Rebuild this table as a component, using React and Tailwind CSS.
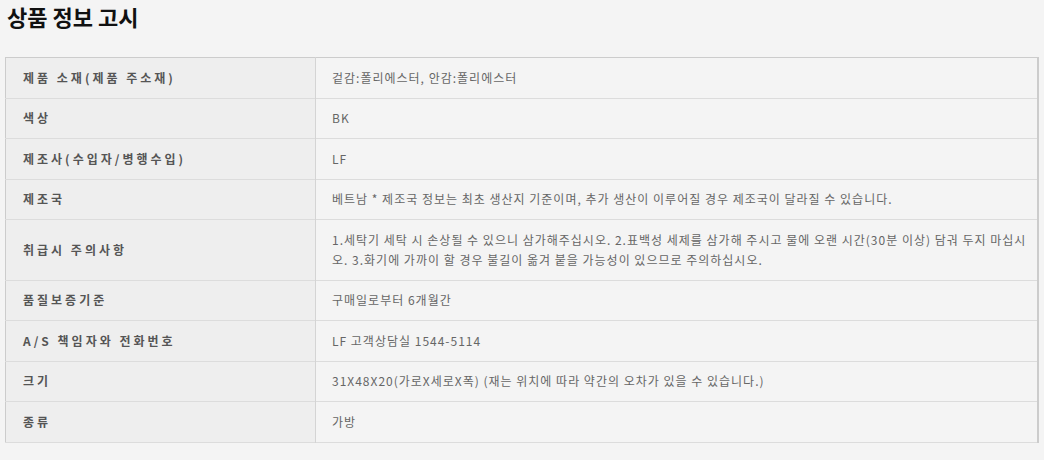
import React from 'react';

const rows = [
  ['제품 소재(제품 주소재)', '겉감:폴리에스터, 안감:폴리에스터'],
  ['색상', 'BK'],
  ['제조사(수입자/병행수입)', 'LF'],
  ['제조국', '베트남 * 제조국 정보는 최초 생산지 기준이며, 추가 생산이 이루어질 경우 제조국이 달라질 수 있습니다.'],
  ['취급시 주의사항', '1.세탁기 세탁 시 손상될 수 있으니 삼가해주십시오. 2.표백성 세제를 삼가해 주시고 물에 오랜 시간(30분 이상) 담궈 두지 마십시오. 3.화기에 가까이 할 경우 불길이 옮겨 붙을 가능성이 있으므로 주의하십시오.'],
  ['품질보증기준', '구매일로부터 6개월간'],
  ['A/S 책임자와 전화번호', 'LF 고객상담실 1544-5114'],
  ['크기', '31X48X20(가로X세로X폭) (재는 위치에 따라 약간의 오차가 있을 수 있습니다.)'],
  ['종류', '가방'],
];

export default function App() {
  return (
    <div className="min-h-[460px] w-[1044px] bg-[#f4f4f4] px-[5px] pt-[1px] font-['Noto_Sans_CJK_KR',sans-serif]">
      <h2 className="text-[22px] font-bold leading-[30px] text-[#111] pl-[2px]">상품 정보 고시</h2>

      <table className="mt-[26px] w-[1034px] border-collapse border border-[#cccccc] border-r-2 text-[12px]">
        <tbody>
          {rows.map(([label, value]) => (
            <tr key={label} className="border-b border-[#dcdcdc]">
              <th className="w-[310px] border-r border-[#d4d4d4] bg-[#eeeeee] py-[9.75px] pl-[17px] pr-2 text-left align-middle font-bold leading-[20px] tracking-[3px] text-[#555]">
                {label}
              </th>
              <td className="py-[9.75px] pl-[16px] pr-[2px] align-middle leading-[20px] tracking-[1px] text-[#666]">
                {value}
              </td>
            </tr>
          ))}
        </tbody>
      </table>
    </div>
  );
}
